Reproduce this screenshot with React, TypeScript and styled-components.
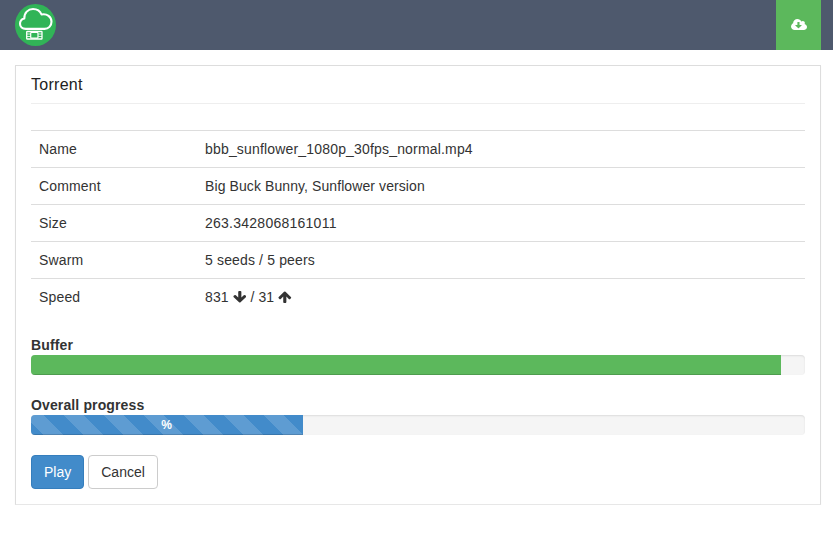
import React from 'react';
import styled, { createGlobalStyle, css } from 'styled-components';

const GlobalStyle = createGlobalStyle`
  *, *::before, *::after { box-sizing: border-box; }
  body {
    margin: 0;
    background: #fff;
    color: #333;
    font: 14px/20px "Liberation Sans", Arial, sans-serif;
  }
`;

const Header = styled.header`
  display: flex;
  justify-content: space-between;
  height: 50px;
  padding: 0 12px 0 15px;
  background: #4e596d;
`;

const LogoLink = styled.a`
  display: flex;
  padding-top: 4px;
`;

const DownloadButton = styled.a`
  display: flex;
  align-items: center;
  justify-content: center;
  width: 45px;
  background: #5cb85c;
  color: #fff;
`;

const Panel = styled.main`
  margin: 15px 12px 0 15px;
  height: 440px;
  padding: 0 15px;
  border: 1px solid #ddd;
  border-bottom-color: #e7e7e7;
  box-shadow: 0 1px 1px rgba(0, 0, 0, 0.05);
`;

const Title = styled.h1`
  height: 38px;
  margin: 0 0 26px;
  padding-top: 9px;
  border-bottom: 1px solid #eee;
  color: #222;
  font-size: 16px;
  font-weight: 400;
  line-height: 20px;
  letter-spacing: 0.28px;
`;

const Details = styled.dl`
  margin: 0 0 20px;
`;

const Row = styled.div`
  display: grid;
  grid-template-columns: 166px 1fr;
  padding: 8px 0;
  border-top: 1px solid #ddd;
`;

const Term = styled.dt`
  padding-left: 8px;
  letter-spacing: 0.16px;
`;

const Value = styled.dd<{ $tracking: number }>`
  margin: 0;
  padding-left: 8px;
  white-space: pre;
  letter-spacing: ${(p) => p.$tracking}px;
`;

const Icon = styled.svg`
  display: inline-block;
  height: 14px;
  fill: currentColor;
  vertical-align: -2px;
`;

const Meter = styled.section`
  margin-bottom: 20px;
  font-weight: 700;
  letter-spacing: 0.13px;
`;

const Track = styled.div`
  height: 20px;
  overflow: hidden;
  border-radius: 4px;
  background: #f5f5f5;
  box-shadow: inset 0 1px 2px rgba(0, 0, 0, 0.1);
`;

const Bar = styled.div<{ $width: number; $striped?: boolean }>`
  width: ${(p) => p.$width}px;
  height: 20px;
  background-color: #5cb85c;
  box-shadow: inset 0 -1px 0 rgba(0, 0, 0, 0.15);
  color: #fff;
  font-size: 12px;
  line-height: 20px;
  letter-spacing: 0;
  text-align: center;
  ${(p) =>
    p.$striped &&
    css`
      padding-right: 1px;
      background-color: #428bca;
      background-image: linear-gradient(
        45deg,
        rgba(255, 255, 255, 0.15) 25%,
        transparent 25%,
        transparent 50%,
        rgba(255, 255, 255, 0.15) 50%,
        rgba(255, 255, 255, 0.15) 75%,
        transparent 75%,
        transparent
      );
      background-position: -7px 0;
      background-size: 40px 40px;
    `}
`;

const Actions = styled.div`
  display: flex;
  gap: 4px;
`;

const Button = styled.button<{ $primary?: boolean }>`
  height: 34px;
  padding: 6px 12px;
  border: 1px solid ${(p) => (p.$primary ? '#357ebd' : '#ccc')};
  border-radius: 4px;
  background: ${(p) => (p.$primary ? '#428bca' : '#fff')};
  color: ${(p) => (p.$primary ? '#fff' : '#333')};
  font: inherit;
  cursor: pointer;
`;

const Logo = () => (
  <svg width="41" height="42" viewBox="0 0 41 42" fill="none" aria-label="Home">
    <ellipse cx="20.5" cy="21" rx="20.5" ry="21" fill="#31b457" />
    <path
      d="M10.8 24.900C7.300 24.900 5 22.800 5 19.800c0-2.800 1.700-4.700 4.300-5.300C9.100 8.900 13.100 5 18 5c4 0 7.200 2.100 8.500 5.500 5.500-1.200 10 2.400 10 7.200 0 4.200-3 7.200-7 7.200z"
      stroke="#fff"
      strokeWidth="2.1"
      strokeLinejoin="round"
    />
    <rect x="11.700" y="27.500" width="15.300" height="7.500" rx=".6" stroke="#fff" strokeWidth="1.300" />
    <rect x="15.700" y="28.300" width="7.300" height="5.900" rx="1" stroke="#fff" strokeWidth="1.200" />
    <path d="M12 30h3.500M12 32.500h3.500M23.300 30H27M23.300 32.500H27" stroke="#fff" strokeWidth=".8" />
  </svg>
);

const CloudDownload = () => (
  <Icon width="16" viewBox="0 0 1920 1792" preserveAspectRatio="none" aria-label="Download">
    <path d="M1280 928q0-14-9-23t-23-9h-224v-352q0-13-9.500-22.500t-22.500-9.500h-192q-13 0-22.500 9.500t-9.500 22.500v352h-224q-13 0-22.500 9.500t-9.500 22.500q0 14 9 23l352 352q9 9 23 9t23-9l351-351q10-12 10-24zm640 224q0 159-112.500 271.500t-271.500 112.500h-1088q-185 0-316.500-131.500t-131.500-316.500q0-130 70-240t188-165q-2-30-2-43 0-212 150-362t362-150q156 0 285.500 87t188.500 231q71-62 166-62 106 0 181 75t75 181q0 76-41 138 130 31 213.500 135.500t83.500 238.500z" />
  </Icon>
);

const ArrowDown = () => (
  <Icon width="13.6" viewBox="0 0 1664 1792" preserveAspectRatio="none" aria-label="down">
    <path d="M1611 832q0 53-37 90l-651 652q-39 37-91 37-53 0-90-37l-651-652q-38-36-38-90 0-53 38-91l74-75q39-37 91-37 53 0 90 37l294 294v-704q0-52 38-90t90-38h128q52 0 90 38t38 90v704l294-294q37-37 90-37 52 0 91 37l75 75q37 39 37 91z" />
  </Icon>
);

const ArrowUp = () => (
  <Icon width="13.6" viewBox="0 0 1664 1792" preserveAspectRatio="none" aria-label="up">
    <path d="M1611 971q0 51-37 90l-75 75q-38 38-91 38-54 0-90-38l-294-293v704q0 52-37.500 84.500t-90.500 32.500h-128q-53 0-90.500-32.500t-37.500-84.500v-704l-294 293q-36 38-90 38t-90-38l-75-75q-38-38-38-90 0-53 38-91l651-651q35-37 90-37 54 0 91 37l651 651q37 39 37 91z" />
  </Icon>
);

const details: { term: string; value: React.ReactNode; tracking: number }[] = [
  { term: 'Name', value: 'bbb_sunflower_1080p_30fps_normal.mp4', tracking: 0.175 },
  { term: 'Comment', value: 'Big Buck Bunny, Sunflower version', tracking: 0.09 },
  { term: 'Size', value: '263.3428068161011', tracking: 0.25 },
  { term: 'Swarm', value: '5 seeds / 5 peers', tracking: 0.15 },
  {
    term: 'Speed',
    value: (
      <>
        831 <ArrowDown /> / 31 <ArrowUp />
      </>
    ),
    tracking: 0.13,
  },
];

export default function App() {
  return (
    <>
      <GlobalStyle />
      <Header>
        <LogoLink>
          <Logo />
        </LogoLink>
        <DownloadButton>
          <CloudDownload />
        </DownloadButton>
      </Header>
      <Panel>
        <Title>Torrent</Title>
        <Details>
          {details.map(({ term, value, tracking }) => (
            <Row key={term}>
              <Term>{term}</Term>
              <Value $tracking={tracking}>{value}</Value>
            </Row>
          ))}
        </Details>
        <Meter>
          Buffer
          <Track>
            <Bar $width={750} />
          </Track>
        </Meter>
        <Meter>
          Overall progress
          <Track>
            <Bar $width={272} $striped>
              %
            </Bar>
          </Track>
        </Meter>
        <Actions>
          <Button $primary>Play</Button>
          <Button>Cancel</Button>
        </Actions>
      </Panel>
    </>
  );
}
